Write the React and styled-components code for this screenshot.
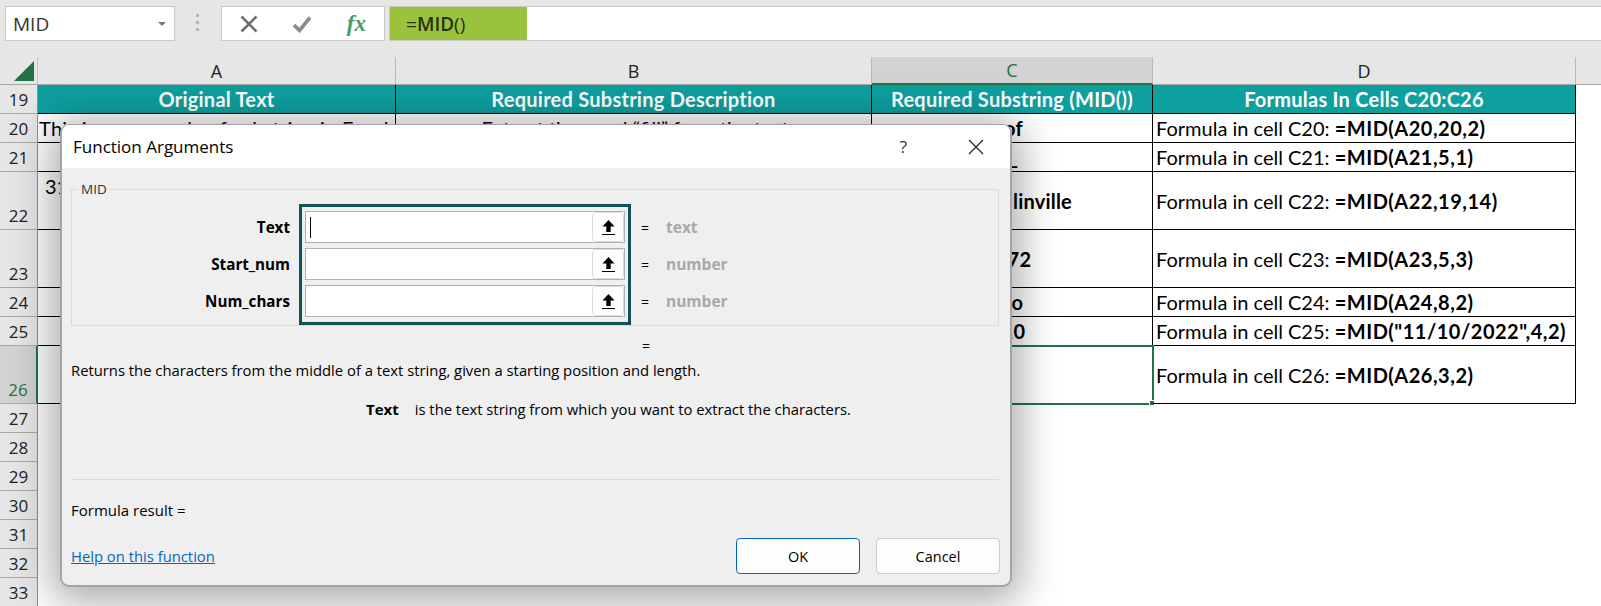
import React from "react";
import styled, { createGlobalStyle } from "styled-components";

const GlobalStyle = createGlobalStyle`
  html, body {
    margin: 0;
    padding: 0;
    background: #fff;
  }
  * {
    box-sizing: border-box;
  }
`;

const UI_FONT = `"Open Sans", "Noto Sans", sans-serif`;
const CELL_FONT = `Lato, "Open Sans", sans-serif`;

const ROWS = [
  { num: 19, height: 29, header: true, cells: ["Original Text", "Required Substring Description", "Required Substring (MID())", "Formulas In Cells C20:C26"] },
  { num: 20, height: 29, cells: ["This is an example of substring in Excel", "Extract the word \u201Cfill\u201D from the text", "of", ["Formula in cell C20: ", "=MID(A20,20,2)"]] },
  { num: 21, height: 29, cells: ["", "", "_", ["Formula in cell C21: ", "=MID(A21,5,1)"]] },
  { num: 22, height: 58, cells: ["31", "", "Ed Collinville", ["Formula in cell C22: ", "=MID(A22,19,14)"]] },
  { num: 23, height: 58, cells: ["", "", "172", ["Formula in cell C23: ", "=MID(A23,5,3)"]] },
  { num: 24, height: 29, cells: ["", "", "to", ["Formula in cell C24: ", "=MID(A24,8,2)"]] },
  { num: 25, height: 29, cells: ["", "", "10", ["Formula in cell C25: ", "=MID(\"11/10/2022\",4,2)"]] },
  { num: 26, height: 58, selected: true, cells: ["", "", "", ["Formula in cell C26: ", "=MID(A26,3,2)"]] },
  { num: 27, height: 29 },
  { num: 28, height: 29 },
  { num: 29, height: 29 },
  { num: 30, height: 29 },
  { num: 31, height: 29 },
  { num: 32, height: 29 },
  { num: 33, height: 29 },
];

const ARGS = [
  { name: "Text", hint: "text", focused: true },
  { name: "Start_num", hint: "number" },
  { name: "Num_chars", hint: "number" },
];

function App() {
  return (
    <Page>
      <GlobalStyle />
      <FormulaBar>
        <NameBox>
          MID
          <DropArrow />
        </NameBox>
        <Grip viewBox="0 0 4 20" width="4" height="20">
          <rect x="0" y="1" width="3" height="3" />
          <rect x="0" y="8" width="3" height="3" />
          <rect x="0" y="15" width="3" height="3" />
        </Grip>
        <FormulaButtons>
          <svg viewBox="0 0 18 18" width="18" height="18">
            <path d="M1.5 1.5 L16.5 16.5 M16.5 1.5 L1.5 16.5" stroke="#6f6f6f" strokeWidth="2.6" fill="none" />
          </svg>
          <svg viewBox="0 0 20 18" width="20" height="18">
            <path d="M2 10 L7.5 15.5 L18 2.5" stroke="#8a8a8a" strokeWidth="3.6" fill="none" />
          </svg>
          <FxLabel>fx</FxLabel>
        </FormulaButtons>
        <FormulaInput>
          <FormulaChip>
            =<strong>MID</strong>()
          </FormulaChip>
        </FormulaInput>
      </FormulaBar>

      <Sheet>
        <Corner>
          <svg viewBox="0 0 20 20" width="20" height="20">
            <polygon points="20,0 20,20 0,20" fill="#217346" />
          </svg>
        </Corner>
        <ColHeader>A</ColHeader>
        <ColHeader>B</ColHeader>
        <ColHeader $active>C</ColHeader>
        <ColHeader>D</ColHeader>
        <ColFiller />

        {ROWS.map((row) => (
          <React.Fragment key={row.num}>
            <RowHeader $height={row.height} $active={row.selected}>
              {row.num}
            </RowHeader>
            {row.header &&
              row.cells.map((text) => <HeadCell key={text}>{text}</HeadCell>)}
            {!row.header && row.cells && (
              <>
                <Cell>
                  {row.num === 22 ? (
                    <WrappedText>{row.cells[0]}</WrappedText>
                  ) : (
                    <LeadText>{row.cells[0]}</LeadText>
                  )}
                </Cell>
                <Cell $center>{row.cells[1]}</Cell>
                <Cell $center $bold $selected={row.selected}>
                  {row.cells[2]}
                  {row.selected && <FillHandle />}
                </Cell>
                <Cell>
                  {row.cells[3][0]}
                  <strong>{row.cells[3][1]}</strong>
                </Cell>
              </>
            )}
            {!row.cells && <EmptyRow />}
            {row.cells && <span />}
          </React.Fragment>
        ))}
      </Sheet>

      <Dialog>
        <TitleBar>
          <DialogTitle>Function Arguments</DialogTitle>
          <HelpMark>?</HelpMark>
          <svg viewBox="0 0 16 16" width="16" height="16">
            <path d="M1 1 L15 15 M15 1 L1 15" stroke="#222" strokeWidth="1.2" fill="none" />
          </svg>
        </TitleBar>

        <GroupBox>
          <GroupLegend>MID</GroupLegend>
          <LabelColumn>
            {ARGS.map((arg) => (
              <ArgLabel key={arg.name}>{arg.name}</ArgLabel>
            ))}
          </LabelColumn>
          <InputFrame>
            {ARGS.map((arg) => (
              <ArgInput key={arg.name}>
                {arg.focused && <Caret />}
                <CollapseButton>
                  <svg viewBox="0 0 13 15" width="13" height="15">
                    <polygon points="6.5,0 12.5,6.5 8.7,6.5 8.7,12 4.3,12 4.3,6.5 0.5,6.5" fill="#000" />
                    <rect x="0" y="14" width="13" height="1" fill="#000" />
                  </svg>
                </CollapseButton>
              </ArgInput>
            ))}
          </InputFrame>
          <HintColumn>
            {ARGS.map((arg) => (
              <ArgHint key={arg.name}>
                <EqualSign>=</EqualSign>
                <HintText>{arg.hint}</HintText>
              </ArgHint>
            ))}
          </HintColumn>
        </GroupBox>

        <ResultEquals>=</ResultEquals>
        <Description>
          Returns the characters from the middle of a text string, given a starting position and length.
        </Description>
        <ArgDescription>
          <strong>Text</strong>
          <span>is the text string from which you want to extract the characters.</span>
        </ArgDescription>

        <Separator />
        <FormulaResult>Formula result =</FormulaResult>
        <Footer>
          <HelpLink href="#help">Help on this function</HelpLink>
          <ButtonRow>
            <DialogButton $primary>OK</DialogButton>
            <DialogButton>Cancel</DialogButton>
          </ButtonRow>
        </Footer>
      </Dialog>
    </Page>
  );
}

export default App;

const Page = styled.div`
  position: relative;
  width: 1601px;
  height: 606px;
  overflow: hidden;
  background: #fff;
  font-family: ${CELL_FONT};
`;

/* formula bar */
const FormulaBar = styled.div`
  display: flex;
  align-items: flex-start;
  height: 57px;
  padding-top: 6px;
  background: #e6e6e6;
`;
const NameBox = styled.div`
  display: flex;
  align-items: center;
  justify-content: space-between;
  width: 170px;
  height: 35px;
  margin-left: 5px;
  padding: 0 8px 0 7px;
  background: #fff;
  border: 1px solid #c9c9c9;
  font-family: ${UI_FONT};
  font-size: 19px;
  color: #333;
`;
const DropArrow = styled.span`
  width: 0;
  height: 0;
  border-left: 4px solid transparent;
  border-right: 4px solid transparent;
  border-top: 4px solid #777;
`;
const Grip = styled.svg`
  margin: 7px 21px 0 21px;
  fill: #b5b5b5;
`;
const FormulaButtons = styled.div`
  display: flex;
  align-items: center;
  justify-content: space-between;
  width: 164px;
  height: 35px;
  padding: 0 18px 0 18px;
  background: #fff;
  border: 1px solid #c9c9c9;
`;
const FxLabel = styled.span`
  font-family: "Liberation Serif", serif;
  font-style: italic;
  font-weight: 700;
  font-size: 23px;
  color: #4b9a6e;
`;
const FormulaInput = styled.div`
  flex: 1;
  height: 35px;
  margin-left: 4px;
  background: #fff;
  border: 1px solid #c9c9c9;
  border-right: none;
`;
const FormulaChip = styled.div`
  display: flex;
  align-items: center;
  width: 137px;
  height: 100%;
  padding-left: 16px;
  background: #9bc23c;
  font-family: ${UI_FONT};
  font-size: 19px;
  color: #26300f;
  strong {
    font-weight: 600;
  }
`;

/* sheet */
const Sheet = styled.div`
  display: grid;
  grid-template-columns: 38px 358px 476px 281px 423px 25px;
`;
const Corner = styled.div`
  display: flex;
  align-items: flex-end;
  justify-content: flex-end;
  height: 28px;
  padding: 0 3px 3px 0;
  background: #e6e6e6;
  border-right: 1px solid #c4c4c4;
  border-bottom: 1px solid #a8a8a8;
`;
const ColHeader = styled.div`
  display: flex;
  align-items: center;
  justify-content: center;
  height: 28px;
  background: ${(p) => (p.$active ? "#d2d2d2" : "#e6e6e6")};
  color: ${(p) => (p.$active ? "#217346" : "#222")};
  border-right: 1px solid #b8b8b8;
  border-bottom: ${(p) => (p.$active ? "2px solid #217346" : "1px solid #a8a8a8")};
  font-family: ${UI_FONT};
  font-size: 18px;
`;
const ColFiller = styled.div`
  background: #e6e6e6;
  border-bottom: 1px solid #a8a8a8;
`;
const RowHeader = styled.div`
  display: flex;
  align-items: flex-end;
  justify-content: center;
  height: ${(p) => p.$height}px;
  background: ${(p) => (p.$active ? "#d2d2d2" : "#e6e6e6")};
  color: ${(p) => (p.$active ? "#217346" : "#222")};
  border-bottom: 1px solid #a8a8a8;
  border-right: ${(p) => (p.$active ? "2px solid #217346" : "1px solid #8f8f8f")};
  font-family: ${UI_FONT};
  font-size: 17px;
  line-height: 27px;
`;
const HeadCell = styled.div`
  display: flex;
  align-items: center;
  justify-content: center;
  background: #0e9f9f;
  color: #fff;
  border-right: 1px solid #000;
  border-bottom: 1px solid #000;
  font-weight: 700;
  font-size: 20px;
  letter-spacing: 0.25px;
`;
const Cell = styled.div`
  position: relative;
  display: flex;
  align-items: center;
  justify-content: ${(p) => (p.$center ? "center" : "flex-start")};
  padding-left: 3px;
  border-right: 1px solid #000;
  border-bottom: 1px solid #000;
  color: #000;
  font-size: 20px;
  letter-spacing: ${(p) => (p.$bold ? "0.2px" : "0")};
  font-weight: ${(p) => (p.$bold ? 700 : 400)};
  white-space: pre;
  strong {
    font-weight: 700;
    letter-spacing: 0.5px;
  }
  ${(p) => p.$selected && "outline: 2px solid #217346; outline-offset: -1px;"}
`;
const LeadText = styled.span`
  margin-left: -2px;
  letter-spacing: 0.25px;
`;
const WrappedText = styled.span`
  padding-left: 4px;
  align-self: flex-start;
  margin-top: 2px;
`;
const FillHandle = styled.span`
  position: absolute;
  right: -3px;
  bottom: -3px;
  width: 6px;
  height: 6px;
  background: #217346;
  border: 1px solid #fff;
`;
const EmptyRow = styled.div`
  grid-column: 2 / -1;
`;

/* dialog */
const Dialog = styled.div`
  position: absolute;
  left: 60px;
  top: 124px;
  display: flex;
  flex-direction: column;
  width: 952px;
  height: 463px;
  background: #efefef;
  border: 1px solid #a4a4a4;
  border-width: 1px 2px 2px 2px;
  border-radius: 9px;
  box-shadow: 0 6px 40px 8px rgba(0, 0, 0, 0.34);
  font-family: ${UI_FONT};
  font-size: 14.8px;
  color: #000;
  overflow: hidden;
`;
const TitleBar = styled.div`
  display: flex;
  align-items: center;
  flex: none;
  height: 43px;
  padding: 0 26px 0 11px;
  background: #fff;
`;
const DialogTitle = styled.span`
  font-size: 17px;
`;
const HelpMark = styled.span`
  margin: 0 61px 0 auto;
  font-size: 17px;
  color: #333;
`;
const GroupBox = styled.div`
  position: relative;
  display: flex;
  flex: none;
  height: 137px;
  margin: 21px 11px 0 9px;
  padding-top: 14px;
  border: 1px solid #dadada;
`;
const GroupLegend = styled.span`
  position: absolute;
  left: 6px;
  top: -9px;
  padding: 0 3px;
  background: #efefef;
  font-size: 13.5px;
  line-height: 16px;
  color: #333;
`;
const LabelColumn = styled.div`
  display: flex;
  flex-direction: column;
  gap: 5px;
  width: 218px;
  margin-right: 9px;
  padding-top: 7px;
`;
const ArgLabel = styled.div`
  display: flex;
  align-items: center;
  justify-content: flex-end;
  height: 32px;
  font-weight: 700;
  font-size: 15.2px;
`;
const InputFrame = styled.div`
  display: flex;
  flex-direction: column;
  gap: 5px;
  width: 332px;
  height: 121px;
  padding: 4px 3px;
  border: 3px solid #0f5257;
`;
const ArgInput = styled.div`
  display: flex;
  align-items: center;
  height: 32px;
  background: #fff;
  border: 1px solid #b0b0b8;
`;
const Caret = styled.span`
  width: 1px;
  height: 21px;
  margin-left: 4px;
  background: #000;
`;
const CollapseButton = styled.div`
  display: flex;
  align-items: center;
  justify-content: center;
  width: 32px;
  height: 30px;
  margin-left: auto;
  background: #fdfdfd;
  border: 1px solid #dcdcdc;
  border-radius: 4px;
`;
const HintColumn = styled.div`
  display: flex;
  flex-direction: column;
  gap: 5px;
  margin-left: 10px;
  padding-top: 7px;
`;
const ArgHint = styled.div`
  display: flex;
  align-items: center;
  height: 32px;
`;
const EqualSign = styled.span`
  width: 25px;
  font-size: 14px;
`;
const HintText = styled.span`
  font-weight: 700;
  font-size: 15.5px;
  color: #a8a8a8;
`;
const ResultEquals = styled.div`
  margin: 10px 0 0 580px;
  font-size: 14px;
  line-height: 20px;
`;
const Description = styled.div`
  margin: 4px 0 0 9px;
  line-height: 20px;
`;
const ArgDescription = styled.div`
  display: flex;
  gap: 16px;
  margin: 19px 0 0 304px;
  line-height: 20px;
  strong {
    font-weight: 700;
    font-size: 15px;
  }
`;
const Separator = styled.div`
  height: 1px;
  margin: 60px 11px 0 9px;
  background: #dadada;
`;
const FormulaResult = styled.div`
  margin: 20px 0 0 9px;
  line-height: 20px;
  font-size: 15px;
`;
const Footer = styled.div`
  display: flex;
  align-items: center;
  justify-content: space-between;
  margin-top: auto;
  padding: 0 10px 11px 9px;
`;
const HelpLink = styled.a`
  color: #0067c0;
  text-decoration: underline;
`;
const ButtonRow = styled.div`
  display: flex;
  gap: 16px;
`;
const DialogButton = styled.button`
  width: 124px;
  height: 36px;
  padding: 0;
  background: #fdfdfd;
  border: 1px solid ${(p) => (p.$primary ? "#0067c0" : "#cccccc")};
  border-radius: 4px;
  font-family: ${UI_FONT};
  font-size: 14.5px;
  color: #000;
`;
